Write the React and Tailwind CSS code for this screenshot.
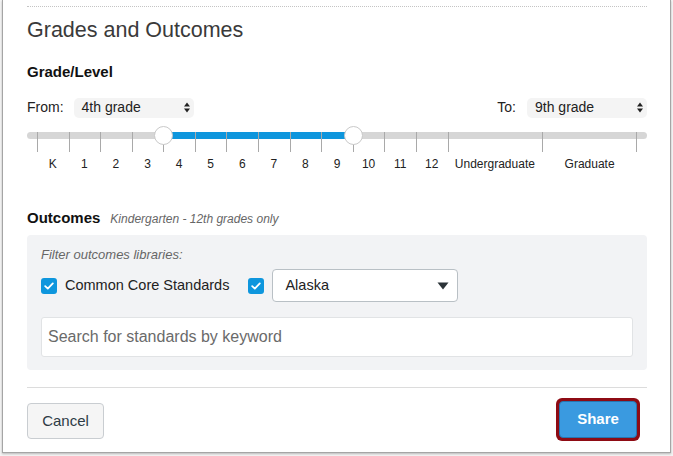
const FONT = { fontFamily: '"Liberation Sans", Arial, sans-serif' };

const grades = ["K", "1", "2", "3", "4", "5", "6", "7", "8", "9", "10", "11", "12", "Undergraduate", "Graduate"];

function UpDown() {
  return (
    <svg width="6" height="11" viewBox="0 0 6 11" className="shrink-0">
      <path d="M0 4.5 L3 0.5 L6 4.5 Z M0 6.5 L3 10.5 L6 6.5 Z" fill="#222" />
    </svg>
  );
}

function GradeSelect({ value }) {
  return (
    <div className="flex h-[20px] w-[120px] items-center justify-between rounded-[5px] bg-[#f4f4f4] pl-[8px] pr-[4px] text-[14px] text-[#222]">
      <span>{value}</span>
      <UpDown />
    </div>
  );
}

function Check() {
  return (
    <div className="flex h-[16px] w-[16px] shrink-0 items-center justify-center rounded-[3px] bg-[#0e96dd]">
      <svg width="10" height="8" viewBox="0 0 10 8">
        <path d="M1.2 4.2 L3.8 6.6 L8.8 1.4" fill="none" stroke="#fff" strokeWidth="1.8" strokeLinecap="round" strokeLinejoin="round" />
      </svg>
    </div>
  );
}

function Slider() {
  const cols = "grid grid-cols-[repeat(13,minmax(0,1fr))_minmax(0,3fr)_minmax(0,3fr)]";
  return (
    <div className="mt-[14px]">
      <div className="relative h-[20px]">
        <div className="absolute left-0 right-0 top-0 h-[7px] rounded-full bg-[#d6d6d6]" />
        <div className="absolute top-0 h-[7px] bg-[#0e96dd] left-[137px] w-[190px]" />
        <div className={`relative mx-[10px] h-[20px] ${cols}`}>
          {grades.map((g, i) => (
            <div key={g} className={`h-[20px] border-l border-[#a9a9a9] ${i === grades.length - 1 ? "border-r" : ""}`} />
          ))}
        </div>
        <div className="absolute left-[127px] top-[-6px] h-[19px] w-[19px] rounded-full border border-[#c9c9c9] bg-white" />
        <div className="absolute left-[317px] top-[-6px] h-[19px] w-[19px] rounded-full border border-[#c9c9c9] bg-white" />
      </div>
      <div className={`mx-[10px] mt-[5px] text-[12px] leading-[14px] text-[#222] ${cols}`}>
        {grades.map((g) => (
          <div key={g} className="text-center whitespace-nowrap">{g}</div>
        ))}
      </div>
    </div>
  );
}

export default function App() {
  return (
    <div className="h-[456px] w-[673px] overflow-hidden bg-[#f4f4f4]" style={FONT}>
      <div className="ml-[2px] flex h-[453px] w-[669px] flex-col border-x border-b border-[#a5a5a5] bg-white pl-[24px] pr-[23px] shadow-[0_1px_2px_rgba(0,0,0,0.25)]">
        <div className="mt-[6px] border-t border-dotted border-[#c4c4c4]" />
        <h1 className="mt-[10px] text-[21.5px] leading-[26px] font-light text-[#3a3a3a]">Grades and Outcomes</h1>

        <h2 className="mt-[20px] text-[15px] leading-[18px] font-bold text-[#111]">Grade/Level</h2>

        <div className="mt-[16px] flex items-center justify-between text-[14px] text-[#222]">
          <div className="flex items-center gap-[10px]">
            <span>From:</span>
            <GradeSelect value="4th grade" />
          </div>
          <div className="flex items-center gap-[11px]">
            <span>To:</span>
            <GradeSelect value="9th grade" />
          </div>
        </div>

        <Slider />

        <div className="mt-[38px] flex items-baseline gap-[10px]">
          <h2 className="text-[15px] leading-[18px] font-bold text-[#111]">Outcomes</h2>
          <span className="text-[12px] italic text-[#666]">Kindergarten - 12th grades only</span>
        </div>

        <div className="mt-[7px] flex h-[135px] flex-col rounded-[4px] bg-[#f2f3f5] px-[14px] pt-[12px]">
          <p className="text-[13px] leading-[16px] italic text-[#666]">Filter outcomes libraries:</p>
          <div className="mt-[6px] flex items-center">
            <Check />
            <span className="ml-[8px] text-[14.5px] text-[#222]">Common Core Standards</span>
            <div className="ml-[19px]"><Check /></div>
            <div className="ml-[8px] flex h-[33px] w-[186px] items-center justify-between rounded-[4px] border border-[#b9c0c5] bg-white pl-[12px] pr-[8px] text-[14.5px] text-[#222]">
              <span>Alaska</span>
              <svg width="12" height="8" viewBox="0 0 12 8">
                <path d="M0.5 0.5 L11.5 0.5 L6 7.5 Z" fill="#2b3338" />
              </svg>
            </div>
          </div>
          <div className="mt-[15px] flex h-[40px] items-center rounded-[3px] border border-[#e1e3e5] bg-white pl-[6px] text-[16px] text-[#6a6a6a]">
            Search for standards by keyword
          </div>
        </div>

        <div className="mt-[17px] border-t border-[#dcdcdc]" />

        <div className="mt-[10px] flex items-start justify-between">
          <button className="mt-[5px] h-[36px] w-[77px] rounded-[4px] border border-[#c9cdd1] bg-[#f5f5f5] text-[15px] text-[#2d3b45]">
            Cancel
          </button>
          <div className="mr-[7px] rounded-[6px] bg-[#8e0b14] p-[3px]">
            <button className="h-[37px] w-[78px] rounded-[4px] border border-[#2675b0] bg-[#3a9ae0] text-[15px] font-bold text-white">
              Share
            </button>
          </div>
        </div>
      </div>
    </div>
  );
}
